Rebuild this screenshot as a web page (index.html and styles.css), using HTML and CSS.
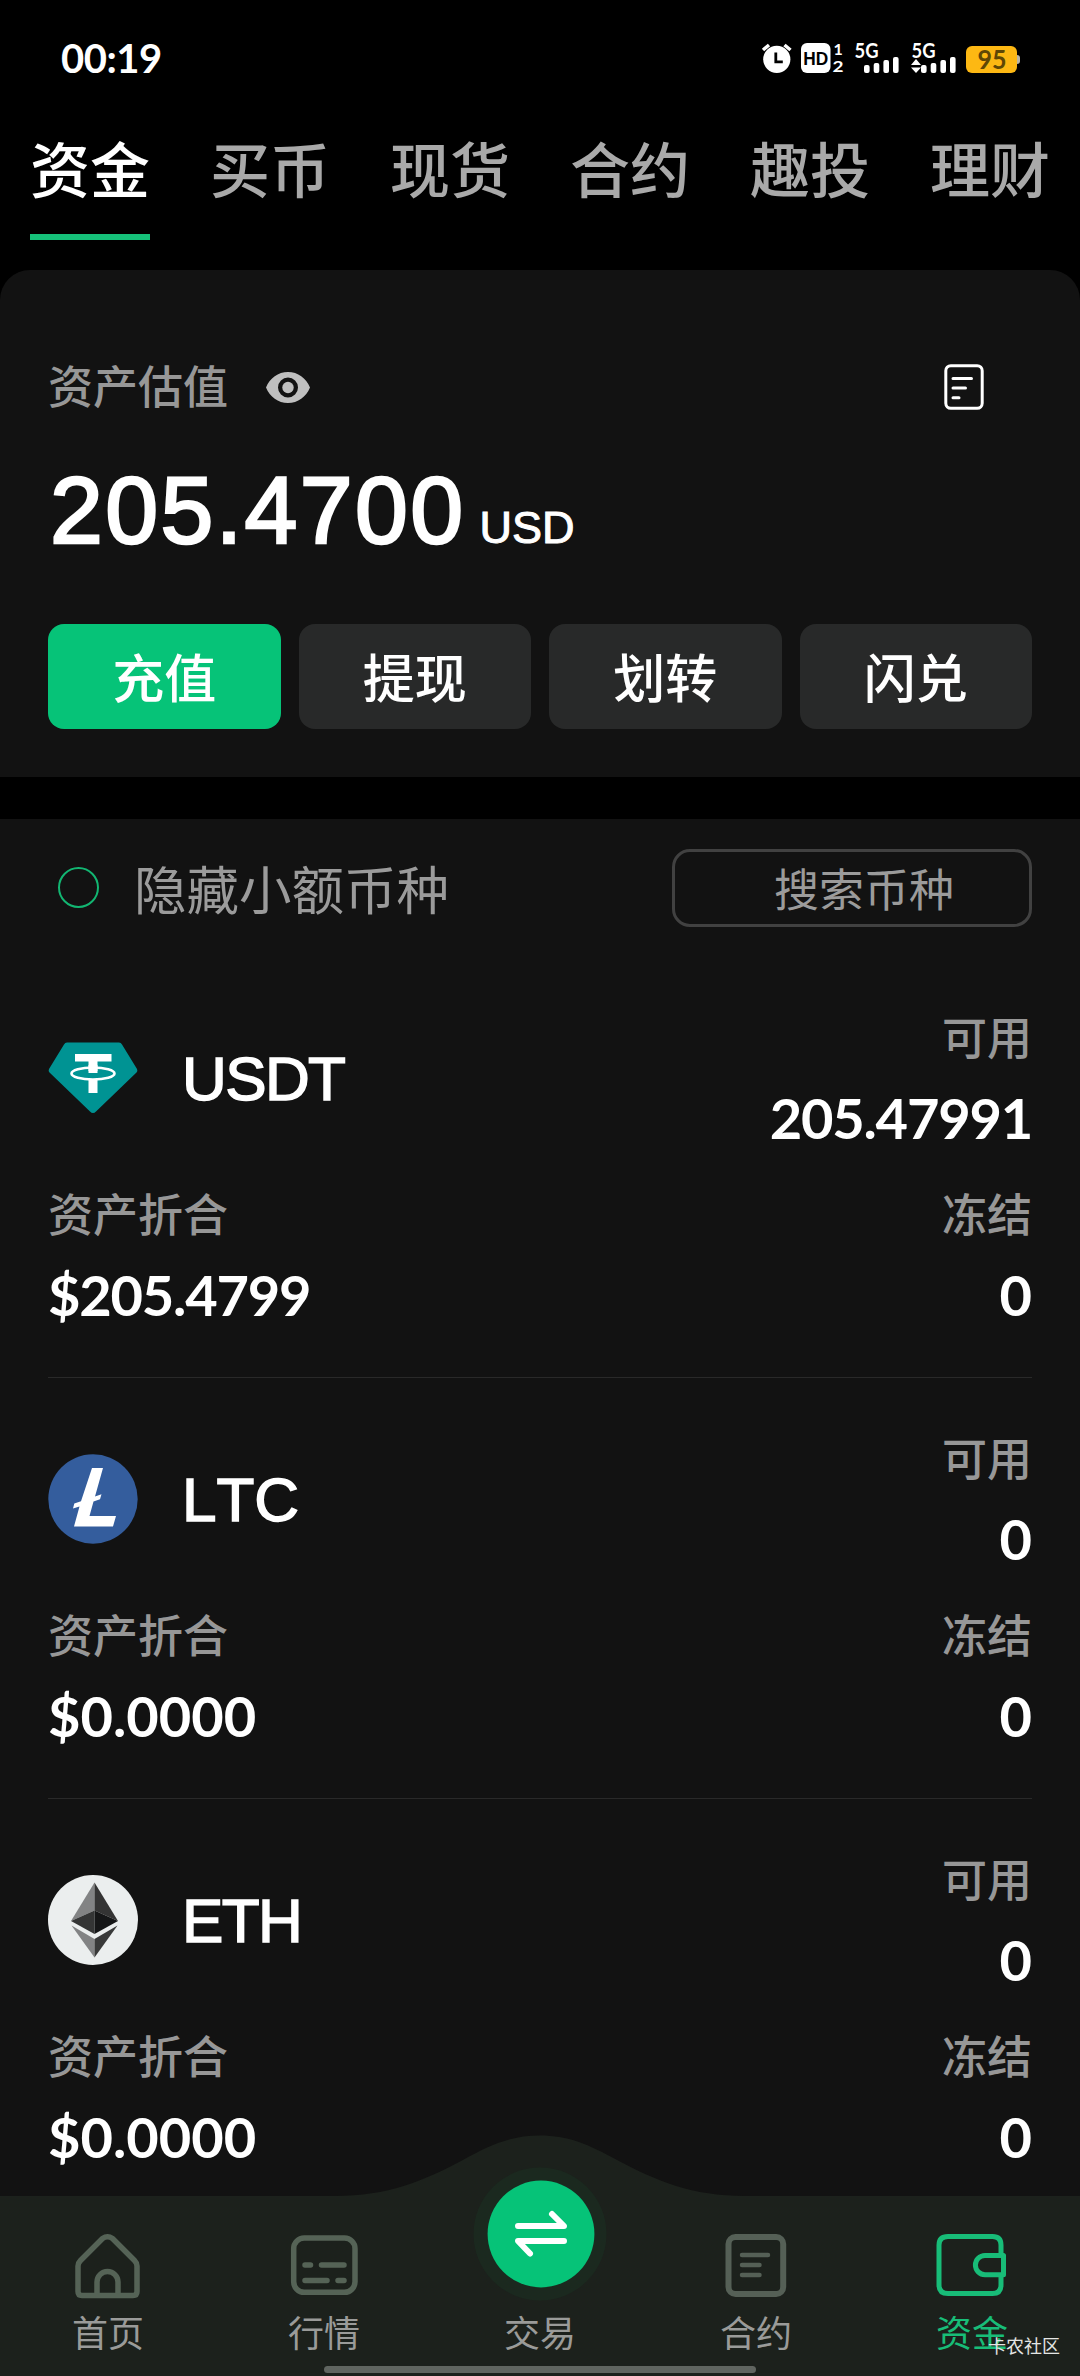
FILE: index.html
```html
<!DOCTYPE html>
<html lang="zh-CN">
<head>
<meta charset="utf-8">
<title>资金</title>
<link rel="stylesheet" href="styles.css">
</head>
<body>
<div class="app">
  <header class="status">
    <span class="clock">00:19</span>
    <svg class="status-icons" width="262" height="46" viewBox="760 34 262 46">
      <g fill="#fff">
        <circle cx="776.8" cy="59.3" r="13.6"/>
        <path d="M763 50l6-5M790.500 50l-6-5" stroke="#fff" stroke-width="3.500" fill="none"/>
        <path d="M775.800 52.500v9.300h7" stroke="#000" stroke-width="2.800" fill="none"/>
        <rect x="801" y="43" width="29.500" height="30" rx="6"/>
        <text x="803.300" y="65.300" class="hd" textLength="25" lengthAdjust="spacingAndGlyphs">HD</text>
        <text x="833.500" y="55" class="sim">1</text>
        <text x="832.500" y="72.300" class="sim" textLength="11" lengthAdjust="spacingAndGlyphs">2</text>
        <text x="854.500" y="57.600" class="net" textLength="24" lengthAdjust="spacingAndGlyphs">5G</text>
        <rect x="864" y="65" width="5.600" height="8" rx="2"/><rect x="873.700" y="63" width="5.600" height="10" rx="2"/><rect x="883.400" y="60" width="5.600" height="13" rx="2"/><rect x="893" y="57" width="5.600" height="16" rx="2"/>
        <text x="911.500" y="57.600" class="net" textLength="24" lengthAdjust="spacingAndGlyphs">5G</text>
        <path d="M911 65l5-6 5 6zM911 67.500l5 5.500 5-5.500z"/>
        <rect x="921" y="65" width="5.600" height="8" rx="2"/><rect x="930.700" y="63" width="5.600" height="10" rx="2"/><rect x="940.400" y="60" width="5.600" height="13" rx="2"/><rect x="950" y="57" width="5.600" height="16" rx="2"/>
      </g>
      <rect x="1012" y="55" width="8" height="9" rx="3" fill="#b9b5a8"/>
      <rect x="966" y="46" width="51" height="27" rx="6" fill="#fdb813"/>
      <text x="977.500" y="69" class="batt" textLength="29" lengthAdjust="spacingAndGlyphs">95</text>
    </svg>
  </header>

  <nav class="tabs">
    <a class="tab active">资金</a><a class="tab">买币</a><a class="tab">现货</a><a class="tab">合约</a><a class="tab">趣投</a><a class="tab">理财</a>
  </nav>

  <section class="card">
    <div class="card-head">
      <span class="label">资产估值</span>
      <svg class="eye" width="44" height="31" viewBox="0 0 44 31"><path fill="#bfbfbf" fill-rule="evenodd" d="M22 0C12 0 4 6 0 15.500 4 25 12 31 22 31s18-6 22-15.500C40 6 32 0 22 0zm0 25.500a10 10 0 1 1 0-20 10 10 0 0 1 0 20z"/><circle cx="22" cy="15.500" r="5.700" fill="#bfbfbf"/></svg>
      <svg class="records" width="40" height="46" viewBox="0 0 40 46" fill="none" stroke="#fff" stroke-width="3" stroke-linecap="round"><rect x="1.800" y="1.700" width="36.400" height="42.600" rx="5"/><path d="M9 14.500h18.500M9 24h12.500M9 33.700h6"/></svg>
    </div>
    <div class="balance"><span class="amount">205.4700</span><span class="unit">USD</span></div>
    <div class="actions">
      <button class="btn primary">充值</button>
      <button class="btn">提现</button>
      <button class="btn">划转</button>
      <button class="btn">闪兑</button>
    </div>
  </section>

  <section class="assets">
    <div class="filter">
      <i class="radio"></i>
      <span class="filter-text">隐藏小额币种</span>
      <div class="search">搜索币种</div>
    </div>

    <article class="asset">
      <div class="row">
        <div class="coin">
          <svg width="90" height="90" viewBox="0 0 90 90"><path fill="#009393" d="M19 9.500h52q2 0 3 2L89 36q1 2-.500 3.500L48 78.500q-3 3-6 0L1.500 39.500Q0 38 1 36L16 11.500q1-2 3-2z"/><g transform="translate(0 -1)"><path fill="#fff" d="M27 22h36.500v7.500H49.500v9.500h-9v-9.500H27zM40.500 48h9v13h-9z"/><ellipse cx="45" cy="41.500" rx="21.500" ry="6" fill="none" stroke="#fff" stroke-width="2.600"/><path stroke="#fff" stroke-width="9" d="M45 33v8"/></g></svg>
          <span class="ticker narrow">USDT</span>
        </div>
        <div class="cell end"><span class="label">可用</span><b class="tight">205.47991</b></div>
      </div>
      <div class="row">
        <div class="cell"><span class="label">资产折合</span><b class="tight">$205.4799</b></div>
        <div class="cell end"><span class="label">冻结</span><b>0</b></div>
      </div>
    </article>

    <article class="asset">
      <div class="row">
        <div class="coin">
          <svg width="90" height="90" viewBox="0 0 90 90"><circle cx="45" cy="45" r="44.700" fill="#345d9d"/><path fill="#fff" d="M44 14h11L47 42.500l6.500-2.300-1.500 5-6.500 2.300L41.500 62H68l-3 10.500H26l5.500-20-6.500 2 1.300-5 6.700-2.300z"/></svg>
          <span class="ticker">LTC</span>
        </div>
        <div class="cell end"><span class="label">可用</span><b>0</b></div>
      </div>
      <div class="row">
        <div class="cell"><span class="label">资产折合</span><b>$0.0000</b></div>
        <div class="cell end"><span class="label">冻结</span><b>0</b></div>
      </div>
    </article>

    <article class="asset">
      <div class="row">
        <div class="coin">
          <svg width="90" height="90" viewBox="0 0 90 90"><circle cx="45" cy="45" r="45" fill="#ebeeee"/><path fill="#828384" d="M46.500 7.500L23 46l23.500-10.500z"/><path fill="#343434" d="M46.500 7.500L70 46 46.500 35.500z"/><path fill="#343535" d="M23 46l23.500-10.500V59z"/><path fill="#151617" d="M70 46L46.500 35.500V59z"/><path fill="#828384" d="M23.500 50.500l23 13.500v18.500z"/><path fill="#383939" d="M69.500 50.500l-23 13.500v18.500z"/></svg>
          <span class="ticker narrow">ETH</span>
        </div>
        <div class="cell end"><span class="label">可用</span><b>0</b></div>
      </div>
      <div class="row">
        <div class="cell"><span class="label">资产折合</span><b>$0.0000</b></div>
        <div class="cell end"><span class="label">冻结</span><b>0</b></div>
      </div>
    </article>
  </section>

  <nav class="dock">
    <svg class="dock-bg" width="1080" height="241" viewBox="0 2135 1080 241"><path fill="#1c211c" d="M0 2196H335C388 2196 423 2181 462 2160.500C492 2144 512 2135.500 540 2135.500S588 2144 618 2160.500C657 2181 692 2196 745 2196H1080V2376H0z"/></svg>
    <a class="dock-item">
      <svg width="70" height="70" viewBox="73 2231 70 70" fill="none" stroke="#556356" stroke-width="5.500" stroke-linejoin="round"><path d="M102.500 2238.500L80.500 2260.500Q78 2263 78 2266V2291.500Q78 2295.500 82 2295.500H133Q137 2295.500 137 2291.500V2266Q137 2263 134.500 2260.500L112.500 2238.500Q107.500 2235 102.500 2238.500zM97 2295V2282a10.500 10.500 0 0 1 21 0V2295"/></svg>
      <span>首页</span>
    </a>
    <a class="dock-item">
      <svg width="70" height="70" viewBox="289.500 2231 70 70" fill="none" stroke="#556356" stroke-width="5.500" stroke-linecap="round"><rect x="294.200" y="2238" width="61.300" height="54.300" rx="10.500"/><path d="M305.500 2265h5.500M322 2265h22.500M305.500 2280.500h22M338.500 2280.500h6"/></svg>
      <span>行情</span>
    </a>
    <a class="dock-item">
      <svg class="swap" width="134" height="134" viewBox="-67 -67 134 134"><circle r="66.500" fill="#1b291f"/><circle cx="1" r="53.400" fill="#06c378"/><path d="M-22-8H24L12-20M24 7H-22L-10 19.500" fill="none" stroke="#fff" stroke-width="6" stroke-linecap="round" stroke-linejoin="round"/></svg>
      <span>交易</span>
    </a>
    <a class="dock-item">
      <svg width="70" height="70" viewBox="720.500 2231 70 70" fill="none" stroke="#556056" stroke-width="6" stroke-linecap="round"><rect x="728" y="2237" width="54.700" height="57" rx="7"/><path stroke-width="4.500" d="M741.500 2255h26M741.500 2265h17.500M741.500 2275h17.500"/></svg>
      <span>合约</span>
    </a>
    <a class="dock-item current">
      <svg width="76" height="70" viewBox="934 2231 76 70" fill="none" stroke="#18bd78" stroke-width="5"><path d="M1001 2255V2245Q1001 2236.500 992.500 2236.500H948Q939 2236.500 939 2245V2285Q939 2293.500 948 2293.500H992.500Q1001 2293.500 1001 2285V2276"/><path d="M1003.500 2255.500H985a9.600 9.600 0 0 0 0 19.200H1003.500z" stroke-linejoin="round"/></svg>
      <span>资金</span>
    </a>
    <i class="home-bar"></i>
    <span class="watermark">卡农社区</span>
  </nav>
</div>
</body>
</html>
```
FILE: styles.css
```css
* { box-sizing: border-box; }
body {
  margin: 0;
  background: #000;
  color: #fff;
  font-family: "Noto Sans CJK SC", sans-serif;
}
.app {
  position: relative;
  width: 1080px;
  height: 2376px;
  overflow: hidden;
}

/* status bar */
.status {
  display: flex;
  justify-content: space-between;
  align-items: flex-start;
  height: 125px;
  padding: 34px 58px 0 61px;
}
.clock {
  padding-top: 6px;
  font: 700 40px/36px Lato, sans-serif;
  letter-spacing: -0.5px;
}
.status-icons { display: block; }
.hd { font: 700 19px "Liberation Sans", sans-serif; fill: #000; }
.sim { font: 700 16px Lato, sans-serif; }
.net { font: 700 20px Lato, sans-serif; }
.batt { font: 700 26px Lato, sans-serif; fill: #5f4705; }

/* top tabs */
.tabs {
  display: flex;
  margin-bottom: 30px;
}
.tab {
  flex: 1;
  margin: 0 30px;
  padding-bottom: 25px;
  border-bottom: 6px solid transparent;
  font-size: 60px;
  font-weight: 500;
  line-height: 84px;
  white-space: nowrap;
  color: #a9a9a9;
}
.tab.active {
  color: #fff;
  border-color: #16c27a;
}

/* balance card */
.card {
  height: 507px;
  padding: 84px 48px 0;
  background: #121212;
  border-radius: 30px 30px 0 0;
}
.card-head {
  display: flex;
  align-items: center;
  height: 66px;
}
.label {
  font-size: 45px;
  font-weight: 500;
  line-height: 60px;
  color: #979797;
}
.card-head .label { padding-bottom: 4px; }
.eye { margin-left: 38px; }
.records { margin: 0 48px 0 auto; }
.balance {
  display: flex;
  align-items: baseline;
  margin: 40px 0 64px 2px;
  height: 100px;
  font-family: "Liberation Sans", Arial, sans-serif;
  line-height: 101px;
}
.amount {
  font-size: 95px;
  letter-spacing: 2.4px;
  -webkit-text-stroke: 2.6px #fff;
}
.unit {
  margin-left: 14px;
  font-size: 45px;
  -webkit-text-stroke: 1px #fff;
}
.actions {
  display: grid;
  grid-template-columns: repeat(4, 1fr);
  gap: 18px;
}
.btn {
  height: 105px;
  padding: 0 0 2px;
  border: 0;
  border-radius: 16px;
  background: #282929;
  color: #fff;
  font: 500 52px/75px "Noto Sans CJK SC", sans-serif;
}
.btn.primary { background: #06c378; }

/* assets */
.assets {
  margin-top: 42px;
  padding: 30px 48px 0;
  height: 1600px;
  background: #121212;
}
.filter {
  display: flex;
  align-items: center;
  height: 78px;
}
.radio {
  width: 41px;
  height: 41px;
  margin: 0 0 2px 10px;
  border: 2px solid #12b672;
  border-radius: 50%;
}
.filter-text {
  margin-left: 35px;
  padding-bottom: 2px;
  font-size: 52.5px;
  line-height: 72px;
  color: #9b9b9b;
}
.search {
  width: 360px;
  height: 78px;
  margin-left: auto;
  padding-left: 24px;
  border: 3px solid #414141;
  border-radius: 18px;
  font-size: 45px;
  line-height: 72px;
  text-align: center;
  color: #9b9b9b;
}
.filter + .asset { margin-top: 30px; }
.asset {
  display: flex;
  flex-direction: column;
  gap: 35px;
  height: 421px;
  padding-top: 49px;
  border-bottom: 1px solid #292929;
}
.row {
  display: flex;
  justify-content: space-between;
}
.coin {
  display: flex;
  align-items: center;
  gap: 44px;
  padding-top: 2px;
}
.ticker {
  padding-top: 1px;
  font: 400 62px/70px "Liberation Sans", Arial, sans-serif;
  font-kerning: none;
  -webkit-text-stroke: 1.5px #fff;
}
.ticker.narrow { letter-spacing: -1.6px; }
.cell {
  display: flex;
  flex-direction: column;
  gap: 22px;
}
.cell.end { text-align: right; }
.cell b {
  font: 700 56px/60px Lato, sans-serif;
}
.cell b.tight { letter-spacing: -1.2px; }

/* bottom dock, floats over the list */
.dock {
  position: absolute;
  left: 0;
  bottom: 0;
  display: flex;
  width: 1080px;
  height: 180px;
}
.dock-bg {
  position: absolute;
  left: 0;
  bottom: 0;
}
.dock-item {
  position: relative;
  flex: 1;
  display: flex;
  flex-direction: column;
  align-items: center;
  justify-content: flex-end;
  gap: 5px;
  padding-bottom: 20px;
  font-size: 36px;
  line-height: 50px;
  color: #9a9b99;
}
.dock-item svg { flex-shrink: 0; }
.current { color: #18bd78; }
.home-bar {
  position: absolute;
  left: 324px;
  bottom: 3px;
  width: 432px;
  height: 7px;
  border-radius: 4px;
  background: #606560;
}
.watermark {
  position: absolute;
  right: 20px;
  bottom: 18px;
  font-size: 18px;
  line-height: 26px;
  color: #e4e6e4;
}
```
